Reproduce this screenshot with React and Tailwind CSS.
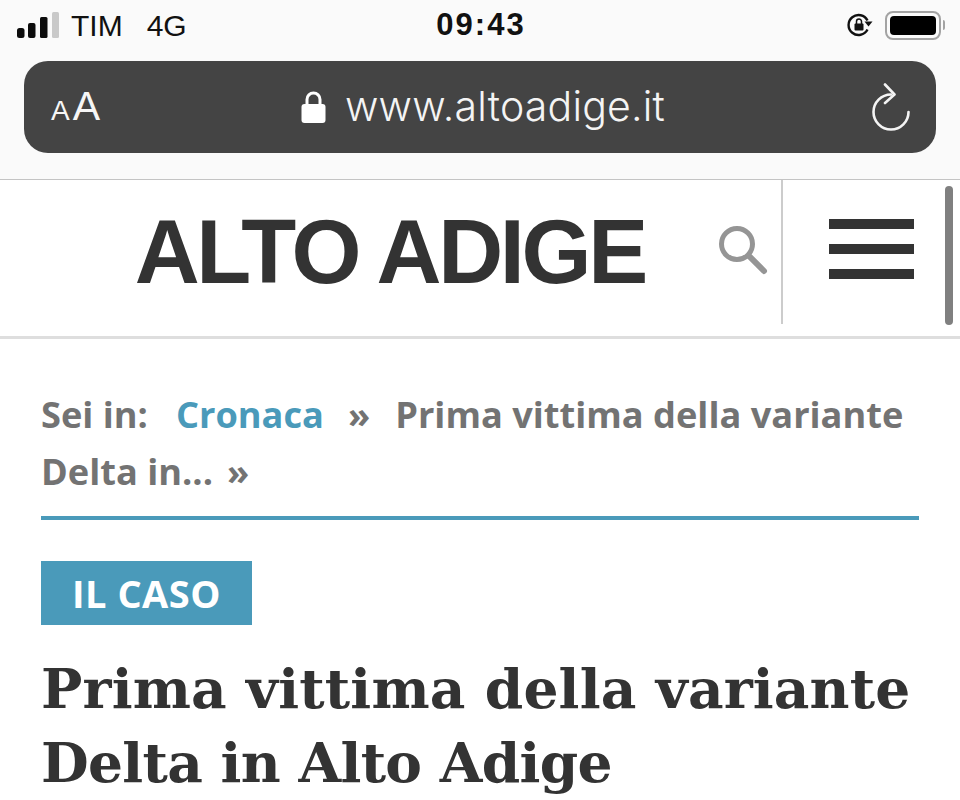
function SignalBars() {
  return (
    <svg width="44" height="26" viewBox="0 0 44 26" className="shrink-0">
      <rect x="0" y="16" width="7.5" height="10" rx="2.5" fill="#0c0c0c" />
      <rect x="11" y="11" width="7.5" height="15" rx="2" fill="#0c0c0c" />
      <rect x="23" y="5" width="7.5" height="21" rx="1.5" fill="#0c0c0c" />
      <rect x="35" y="0" width="7" height="26" rx="1.5" fill="#c9c9c9" />
    </svg>
  );
}

function OrientationLock() {
  return (
    <svg width="28" height="26" viewBox="0 0 28 26">
      <path d="M21.5 17.5A10 10 0 1 1 21.5 8.5" fill="none" stroke="#111" strokeWidth="2.4" />
      <path d="M18.5 9.5h8l-4 5z" fill="#111" />
      <rect x="8.5" y="11.5" width="9" height="7" rx="1" fill="#111" />
      <path d="M10.5 12V9.5a2.5 2.5 0 0 1 5 0V12" fill="none" stroke="#111" strokeWidth="1.5" />
    </svg>
  );
}

function Battery() {
  return (
    <div className="flex items-center">
      <div className="w-[56px] h-[29px] rounded-[8px] border-2 border-[#a3a3a3] p-[3px]">
        <div className="w-full h-full rounded-[4px] bg-black" />
      </div>
      <div className="w-[2px] h-[10px] ml-[2px] rounded-r bg-[#a3a3a3]" />
    </div>
  );
}

function LockIcon() {
  return (
    <svg width="25" height="34" viewBox="0 0 25 34">
      <path d="M6 15V9.5a6.5 6.5 0 0 1 13 0V15" fill="none" stroke="#fff" strokeWidth="3" />
      <rect x="0.5" y="14" width="24" height="19" rx="3" fill="#fff" />
    </svg>
  );
}

function ReloadIcon() {
  return (
    <svg width="40" height="48" viewBox="0 0 40 48">
      <path d="M20 11.5A17.5 17.5 0 1 0 37.5 29" fill="none" stroke="#f4f4f4" strokeWidth="2.6" strokeLinecap="round" />
      <path d="M14 1.5L23.5 11.5L14 20" fill="none" stroke="#f4f4f4" strokeWidth="2.6" strokeLinecap="round" strokeLinejoin="round" />
    </svg>
  );
}

function SearchIcon() {
  return (
    <svg width="50" height="50" viewBox="0 0 50 50">
      <circle cx="19" cy="19" r="15.5" fill="none" stroke="#959595" strokeWidth="5" />
      <path d="M31 31L46 46" stroke="#959595" strokeWidth="6" strokeLinecap="round" />
    </svg>
  );
}

export default function App() {
  return (
    <div className="relative w-[960px] h-[800px] overflow-hidden bg-white font-['Open_Sans',sans-serif]">
      {/* ios chrome */}
      <div className="h-[180px] bg-[#fafafa] border-b border-[#c4c4c4]">
        <div className="h-[61px] pb-[11px] pl-[17px] pr-[15px] flex items-center justify-between font-['Liberation_Sans',sans-serif] text-[#111]">
          <div className="flex flex-1 items-center">
            <SignalBars />
            <span className="ml-[10px] text-[30px]">TIM</span>
            <span className="ml-[24px] text-[30px]">4G</span>
          </div>
          <span className="text-[31px] font-bold tracking-[2px]">09:43</span>
          <div className="flex flex-1 items-center justify-end gap-[11px]">
            <OrientationLock />
            <Battery />
          </div>
        </div>
        <div className="mx-[24px] h-[92px] rounded-[24px] bg-[#444444] flex items-center pl-[27px] pr-[25px] text-white font-['Liberation_Sans',sans-serif]">
          <div className="w-[250px] flex items-baseline gap-[3px] text-[#f6f6f6]">
            <span className="text-[28px]">A</span>
            <span className="text-[41px]">A</span>
          </div>
          <div className="flex items-center gap-[19px]">
            <LockIcon />
            <span className="text-[41px] tracking-[0.2px] text-[#f4f4f4] font-['Inter',sans-serif] font-light">www.altoadige.it</span>
          </div>
          <div className="ml-auto">
            <ReloadIcon />
          </div>
        </div>
      </div>

      {/* site header */}
      <div className="h-[159px] border-b-[3px] border-[#dedede] flex items-stretch">
        <div className="w-[718px] flex items-center justify-end pr-[73px] pb-[13px]">
          <span className="font-['Liberation_Sans',sans-serif] font-bold text-[90px] leading-none tracking-[-3.3px] text-[#333333]">ALTO ADIGE</span>
        </div>
        <div className="w-[63px] flex items-center pb-[16px]">
          <SearchIcon />
        </div>
        <div className="mb-[12px] border-l-2 border-[#cccccc] pl-[46px] pb-[7px] flex flex-col justify-center gap-[15px]">
          <div className="w-[85px] h-[10px] bg-[#333333]" />
          <div className="w-[85px] h-[10px] bg-[#333333]" />
          <div className="w-[85px] h-[10px] bg-[#333333]" />
        </div>
      </div>
      <div className="absolute left-[945px] top-[186px] w-[8px] h-[139px] rounded-full bg-[#808080]" />

      {/* article head */}
      <div className="px-[41px] pt-[47px]">
        <div className="w-[878px] h-[134px] border-b-[4px] border-[#4a9aba] text-[36.2px] leading-[57px] font-bold text-[#737373]">
          <div className="whitespace-nowrap">
            Sei in:<span className="ml-[28px] text-[#4a9aba]">Cronaca</span><span className="ml-[24px]">»</span><span className="ml-[25px]">Prima vittima della variante</span>
          </div>
          <div className="whitespace-nowrap">
            Delta in...<span className="ml-[14px]">»</span>
          </div>
        </div>
        <div className="mt-[41px] w-[211px] h-[64px] bg-[#4a9aba] flex items-center justify-center text-[38px] font-bold tracking-[0.5px] text-white">IL CASO</div>
        <h1 className="mt-[27px] font-['DejaVu_Serif',serif] font-bold text-[55px] leading-[74px] text-[#333333] whitespace-nowrap">
          <span className="tracking-[0.15px]">Prima vittima della variante</span>
          <br />
          <span className="tracking-[-0.7px]">Delta in Alto Adige</span>
        </h1>
      </div>
    </div>
  );
}
